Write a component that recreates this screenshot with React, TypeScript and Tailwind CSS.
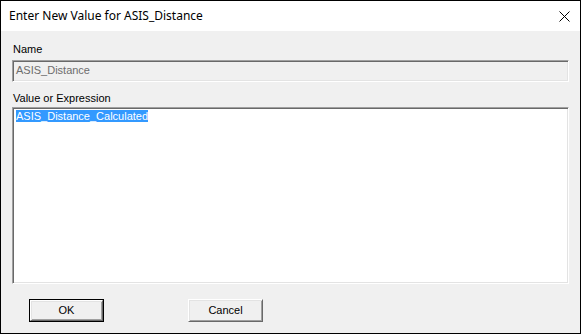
export default function App() {
  return (
    <div className="w-[581px] h-[334px] border border-black flex flex-col bg-[#f0f0f0] overflow-hidden">
      {/* Title bar */}
      <div className="h-[30px] bg-white flex items-center pl-[8px] pr-[10px] shrink-0">
        <div className="flex-1 text-[12px] text-black font-['Segoe_UI','Noto_Sans',sans-serif] leading-none pb-[1px]">
          Enter New Value for ASIS_Distance
        </div>
        <svg width="11" height="11" viewBox="0 0 11 11" className="mr-[0px]">
          <path d="M0.5 0.5 L10.5 10.5 M10.5 0.5 L0.5 10.5" stroke="#000" strokeWidth="1" />
        </svg>
      </div>

      {/* Body */}
      <div className="flex-1 flex flex-col px-[11px] pt-[12px] font-['Liberation_Sans',Arial,sans-serif] text-[11px] text-black">
        <div className="leading-[13px] pl-[1px]">Name</div>
        <div className="mt-[4px] h-[22px] border border-t-[#a0a0a0] border-l-[#a0a0a0] border-b-white border-r-white shadow-[inset_1px_1px_0_#696969,inset_-1px_-1px_0_#e3e3e3] bg-[#f0f0f0] pl-[3px] pt-[3px] leading-[13px] text-[#6d6d6d]">
          ASIS_Distance
        </div>

        <div className="mt-[10px] leading-[13px] pl-[1px]">Value or Expression</div>
        <div className="mt-[2px] h-[177px] border border-t-[#a0a0a0] border-l-[#a0a0a0] border-b-white border-r-white shadow-[inset_1px_1px_0_#696969,inset_-1px_-1px_0_#e3e3e3] bg-white pl-[3px] pt-[2px] leading-[13px]">
          <span className="bg-[#3399ff] text-white">ASIS_Distance_Calculated</span>
        </div>

        <div className="mt-[15px] flex gap-[84px] pl-[17px]">
          <button className="w-[75px] h-[23px] border border-black bg-[#f0f0f0] p-0">
            <div className="w-full h-full border border-t-white border-l-white border-b-[#696969] border-r-[#696969] shadow-[inset_1px_1px_0_#e3e3e3,inset_-1px_-1px_0_#a0a0a0] flex items-center justify-center leading-none">
              OK
            </div>
          </button>
          <button className="w-[75px] h-[23px] border border-t-white border-l-white border-b-[#696969] border-r-[#696969] shadow-[inset_1px_1px_0_#e3e3e3,inset_-1px_-1px_0_#a0a0a0] bg-[#f0f0f0] flex items-center justify-center leading-none p-0">
            Cancel
          </button>
        </div>
      </div>
    </div>
  )
}
